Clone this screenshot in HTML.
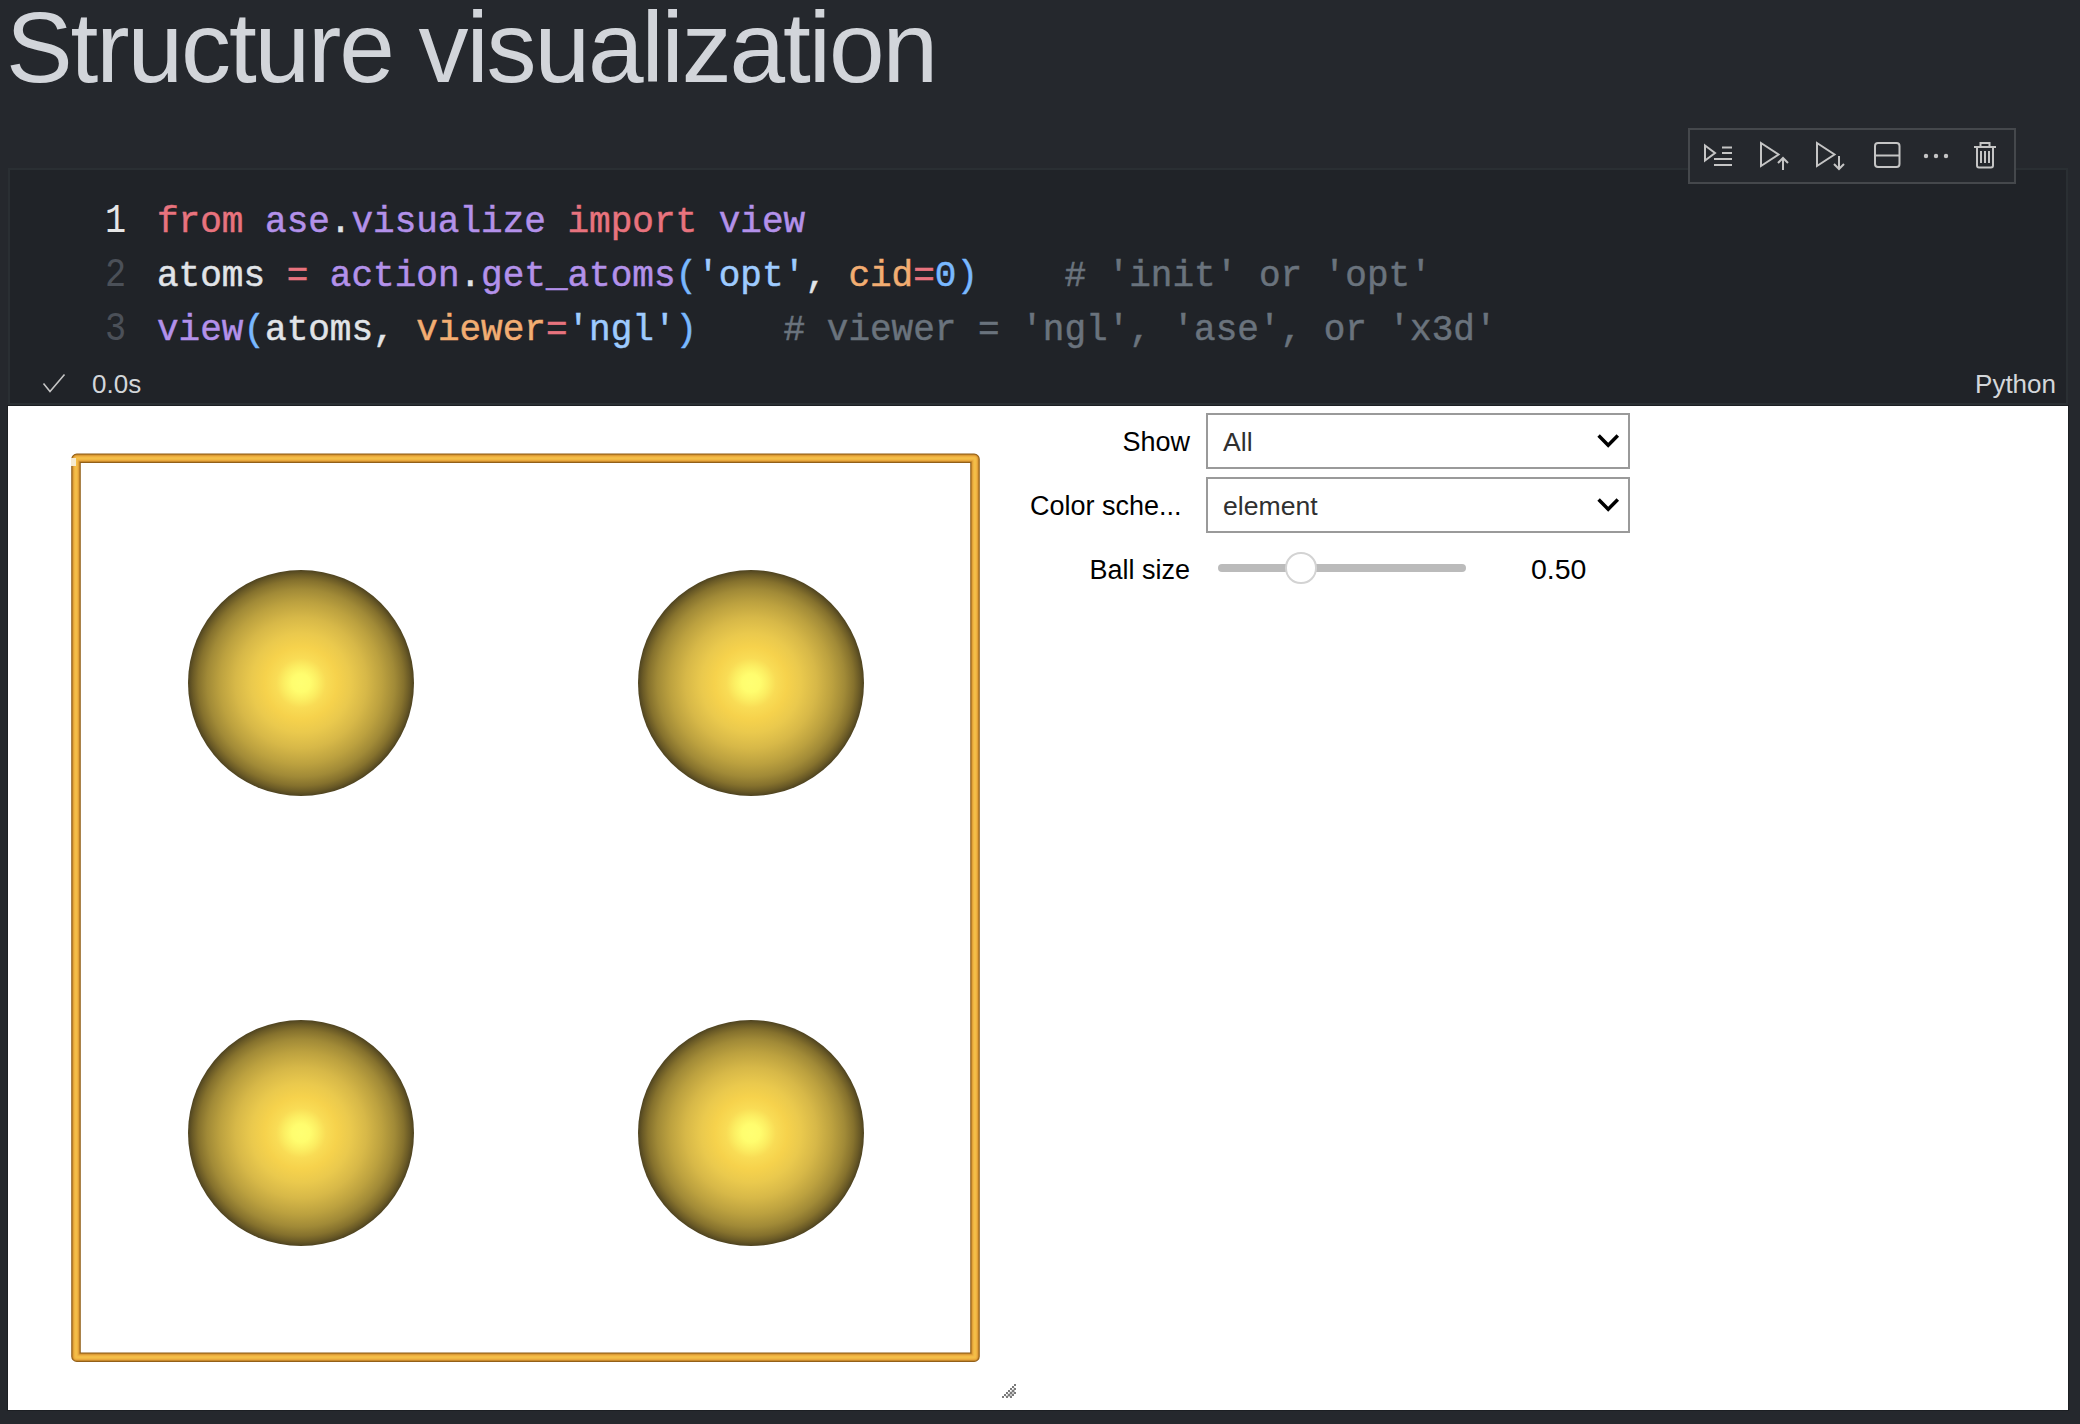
<!DOCTYPE html>
<html><head><meta charset="utf-8">
<style>
html,body{margin:0;padding:0;}
body{width:2080px;height:1424px;overflow:hidden;background:#25282d;position:relative;font-family:"Liberation Sans",sans-serif;}
.abs{position:absolute;}
#title{left:6px;top:-3px;letter-spacing:-2.1px;font-size:100px;color:#d2d5da;white-space:nowrap;line-height:1;}
#toolbar{left:1688px;top:128px;width:324px;height:52px;border:2px solid #45484c;background:#25282d;}
#cell{left:8px;top:168px;width:2056px;height:233px;border:2px solid #2a2f33;background:#202328;}
.code{font-family:"Liberation Mono",monospace;font-size:36px;white-space:pre;line-height:54px;-webkit-text-stroke:0.5px currentColor;}
.ln{color:#4b5058;}
#out{left:8px;top:406px;width:2060px;height:1004px;background:#fff;box-shadow:0 0 0 1px #1c1f23;}
.lbl{font-size:27px;color:#000;white-space:nowrap;}
.sel{left:1206px;width:420px;height:52px;border:2px solid #9a9a9a;background:#fff;}
.seltxt{font-size:26.6px;color:#303030;white-space:nowrap;}

.sph{position:absolute;width:226px;height:226px;border-radius:50%;
background:radial-gradient(circle closest-side at 50% 50%, #ffff72 0%, #fffd6e 8%, #fcee62 15%, #f9dc55 22%, #f6d24c 32%, #eac94d 44%, #d7b848 58%, #bca13f 72%, #a18a37 83%, #85712d 91%, #6a5a26 96%, #4e4320 100%);}
</style></head>
<body>
<div id="title" class="abs">Structure visualization</div>

<div id="cell" class="abs"></div>

<div id="toolbar" class="abs"></div>

<div class="abs code" style="left:0;top:196px;width:2080px;">
<div style="position:absolute;left:157px;top:0;"><span style="color:#e8737e">from</span> <span style="color:#b391ea">ase</span><span style="color:#e1e4e8">.</span><span style="color:#b391ea">visualize</span> <span style="color:#e8737e">import</span> <span style="color:#b391ea">view</span></div>
<div style="position:absolute;left:157px;top:54px;"><span style="color:#e1e4e8">atoms</span> <span style="color:#e8737e">=</span> <span style="color:#b391ea">action</span><span style="color:#e1e4e8">.</span><span style="color:#b391ea">get_atoms</span><span style="color:#79b8ff">(</span><span style="color:#9ecbff">'opt'</span><span style="color:#e1e4e8">,</span> <span style="color:#f2ad72">cid</span><span style="color:#e8737e">=</span><span style="color:#79b8ff">0</span><span style="color:#79b8ff">)</span>    <span style="color:#6a737d"># 'init' or 'opt'</span></div>
<div style="position:absolute;left:157px;top:108px;"><span style="color:#b391ea">view</span><span style="color:#79b8ff">(</span><span style="color:#e1e4e8">atoms</span><span style="color:#e1e4e8">,</span> <span style="color:#f2ad72">viewer</span><span style="color:#e8737e">=</span><span style="color:#9ecbff">'ngl'</span><span style="color:#79b8ff">)</span>    <span style="color:#6a737d"># viewer = 'ngl', 'ase', or 'x3d'</span></div>
</div>

<div class="abs" style="right:1954px;top:195px;font-family:'Liberation Mono',monospace;font-size:40px;line-height:54px;text-align:right;transform:scaleX(0.88);transform-origin:100% 0;">
<div style="color:#e6e6e6">1</div><div class="ln">2</div><div class="ln">3</div>
</div>
<div class="abs" style="left:92px;top:369px;font-size:26px;color:#d3d6da;">0.0s</div>
<div class="abs" style="right:24px;top:369px;font-size:26px;color:#d3d6da;">Python</div>

<div id="out" class="abs"></div>

<div class="abs lbl" style="right:890px;top:427px;">Show</div>
<div class="abs lbl" style="left:1030px;top:491px;">Color sche...</div>
<div class="abs lbl" style="right:890px;top:555px;">Ball size</div>
<div class="abs sel" style="top:413px;"></div>
<div class="abs sel" style="top:477px;"></div>
<div class="abs seltxt" style="left:1223px;top:427px;">All</div>
<div class="abs seltxt" style="left:1223px;top:491px;">element</div>
<div class="abs" style="left:1531px;top:553px;font-size:28.5px;letter-spacing:0px;color:#000;">0.50</div>


<svg class="abs" style="left:0;top:0;" width="2080" height="1424">
<rect x="76" y="458.25" width="899" height="899" rx="0.8" fill="none" stroke="#8e5c16" stroke-width="9.50"/>
<rect x="76" y="458.25" width="899" height="899" rx="0.8" fill="none" stroke="#a46e22" stroke-width="8.17"/>
<rect x="76" y="458.25" width="899" height="899" rx="0.8" fill="none" stroke="#d2922f" stroke-width="6.84"/>
<rect x="76" y="458.25" width="899" height="899" rx="0.8" fill="none" stroke="#e6a63c" stroke-width="5.51"/>
<rect x="76" y="458.25" width="899" height="899" rx="0.8" fill="none" stroke="#eeb043" stroke-width="4.18"/>
<rect x="76" y="458.25" width="899" height="899" rx="0.8" fill="none" stroke="#f2b946" stroke-width="2.85"/>
<rect x="76" y="458.25" width="899" height="899" rx="0.8" fill="none" stroke="#f4bf48" stroke-width="1.52"/>
<rect x="71" y="458" width="5" height="8" fill="#f5ead0"/>
</svg>
<div class="sph" style="left:188px;top:570px;"></div>
<div class="sph" style="left:638px;top:570px;"></div>
<div class="sph" style="left:188px;top:1020px;"></div>
<div class="sph" style="left:638px;top:1020px;"></div>

<svg class="abs" style="left:1595px;top:431.6px;" width="27" height="19"><polyline points="3.6,3.6 13.2,13.2 22.8,3.6" fill="none" stroke="#000" stroke-width="3.5"/></svg>
<svg class="abs" style="left:1595px;top:495.6px;" width="27" height="19"><polyline points="3.6,3.6 13.2,13.2 22.8,3.6" fill="none" stroke="#000" stroke-width="3.5"/></svg>

<div class="abs" style="left:1218px;top:564px;width:248px;height:8px;border-radius:4px;background:#bbbbbb;"></div>
<div class="abs" style="left:1285px;top:552px;width:27.5px;height:27.5px;border-radius:50%;border:2px solid #d3d3d3;background:#fff;"></div>

<svg class="abs" style="left:999px;top:1381px;" width="20" height="20">
<polygon points="6,16 16,6 16,12 12,16" fill="#c6c6c6"/>
<g fill="#7a7a7a">
<rect x="15" y="3" width="2" height="2"/>
<rect x="13" y="5" width="2" height="2"/><rect x="15" y="7" width="2" height="2"/>
<rect x="11" y="7" width="2" height="2"/><rect x="13" y="9" width="2" height="2"/><rect x="15" y="11" width="2" height="2"/>
<rect x="9" y="9" width="2" height="2"/><rect x="11" y="11" width="2" height="2"/><rect x="13" y="13" width="2" height="2"/>
<rect x="7" y="11" width="2" height="2"/><rect x="9" y="13" width="2" height="2"/><rect x="11" y="15" width="2" height="2"/>
<rect x="5" y="13" width="2" height="2"/><rect x="7" y="15" width="2" height="2"/>
<rect x="3" y="15" width="2" height="2"/>
</g>
</svg>

<svg class="abs" style="left:1688px;top:128px;" width="328" height="56" fill="none" stroke="#c5c5c5" stroke-width="2">
<g transform="translate(-1688,-128)">
<path d="M1705 145.5 L1715 153 L1705 160.5 Z" stroke-linejoin="miter"/>
<path d="M1722 147.5 H1732 M1722 153 H1732 M1714 159 H1732 M1714 165 H1732"/>
<path d="M1761 143 L1778.5 154.5 L1761 166 Z"/>
<path d="M1783 170 V158 M1778 163 L1783 158 L1788 163"/>
<path d="M1817 143 L1834.5 154.5 L1817 166 Z"/>
<path d="M1839 156 V169 M1834 164 L1839 169 L1844 164"/>
<rect x="1875" y="143" width="24.5" height="24" rx="3"/>
<path d="M1875 155.5 H1899.5"/>
<circle cx="1926" cy="156" r="2.2" fill="#c5c5c5" stroke="none"/>
<circle cx="1936" cy="156" r="2.2" fill="#c5c5c5" stroke="none"/>
<circle cx="1946" cy="156" r="2.2" fill="#c5c5c5" stroke="none"/>
<path d="M1974 147 H1996 M1980.5 147 V143 H1989.5 V147 M1977 147 V165.5 Q1977 167.5 1979 167.5 H1991 Q1993 167.5 1993 165.5 V147 M1981 151 V163 M1985 151 V163 M1989 151 V163"/>
</g>
</svg>

<svg class="abs" style="left:40px;top:370px;" width="30" height="25"><polyline points="3.5,13.5 10,21.5 24.5,4.5" fill="none" stroke="#c5c5c5" stroke-width="1.6"/></svg>
</body></html>
